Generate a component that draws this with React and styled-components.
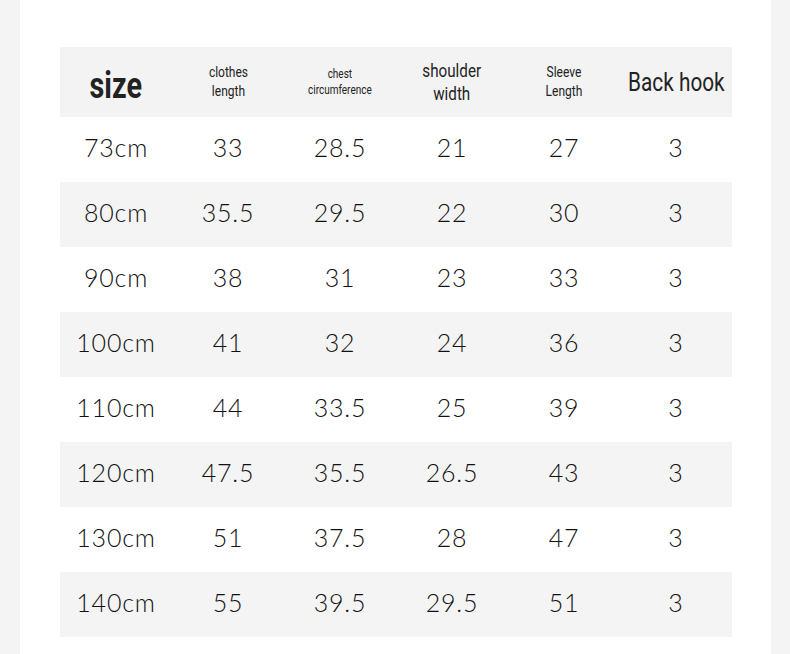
import React from "react";
import styled, { createGlobalStyle } from "styled-components";

const GlobalStyle = createGlobalStyle`
  html, body {
    margin: 0;
    padding: 0;
    background: #f4f4f4;
  }
`;

const Page = styled.div`
  width: 790px;
  height: 654px;
  display: flex;
  background: #f4f4f4;
`;

const Panel = styled.div`
  margin: 0 19px 0 20px;
  flex: 1;
  background: #ffffff;
  padding: 47px 0 0 40px;
  box-sizing: border-box;
`;

const Table = styled.div`
  width: 672px;
  display: grid;
  grid-template-columns: repeat(6, 112px);
`;

const HeadCell = styled.div`
  height: 70px;
  background: #f3f3f3;
  display: flex;
  align-items: center;
  justify-content: center;
  text-align: center;
  padding-top: ${(p) => p.$shift || 0}px;
  box-sizing: border-box;
`;

// narrow label: Roboto squeezed to look like a condensed face
const HeadLabel = styled.div`
  font-family: "Roboto", "Liberation Sans", sans-serif;
  font-weight: ${(p) => (p.$bold ? 700 : 400)};
  font-size: ${(p) => p.$size}px;
  line-height: ${(p) => p.$lh || 1.3};
  color: #222;
  white-space: nowrap;
  transform: scaleX(0.8);
`;

const Cell = styled.div`
  height: 65px;
  padding-bottom: 5px;
  box-sizing: border-box;
  background: ${(p) => (p.$shade ? "#f4f4f4" : "#ffffff")};
  display: flex;
  align-items: center;
  justify-content: center;
  font-family: "Lato", "DejaVu Sans", sans-serif;
  font-weight: 300;
  font-size: 25px;
  color: #111;
  letter-spacing: 0.8px;
`;

const headers = [
  { text: "size", size: 36, bold: true, shift: 8, lh: 1 },
  { text: ["clothes", "length"], size: 15 },
  { text: ["chest", "circumference"], size: 12.5 },
  { text: ["shoulder", "width"], size: 19, lh: 1.2, shift: 2 },
  { text: ["Sleeve", "Length"], size: 15 },
  { text: "Back hook", size: 26, lh: 1 },
];

const rows = [
  ["73cm", "33", "28.5", "21", "27", "3"],
  ["80cm", "35.5", "29.5", "22", "30", "3"],
  ["90cm", "38", "31", "23", "33", "3"],
  ["100cm", "41", "32", "24", "36", "3"],
  ["110cm", "44", "33.5", "25", "39", "3"],
  ["120cm", "47.5", "35.5", "26.5", "43", "3"],
  ["130cm", "51", "37.5", "28", "47", "3"],
  ["140cm", "55", "39.5", "29.5", "51", "3"],
];

export default function App() {
  return (
    <Page>
      <GlobalStyle />
      <Panel>
        <Table>
          {headers.map((h, i) => (
            <HeadCell key={i} $shift={h.shift}>
              <HeadLabel $size={h.size} $bold={h.bold} $lh={h.lh}>
                {Array.isArray(h.text) ? (
                  <>
                    {h.text[0]}
                    <br />
                    {h.text[1]}
                  </>
                ) : (
                  h.text
                )}
              </HeadLabel>
            </HeadCell>
          ))}
          {rows.map((r, ri) =>
            r.map((v, ci) => (
              <Cell key={ri + "-" + ci} $shade={ri % 2 === 1}>
                {v}
              </Cell>
            ))
          )}
        </Table>
      </Panel>
    </Page>
  );
}
